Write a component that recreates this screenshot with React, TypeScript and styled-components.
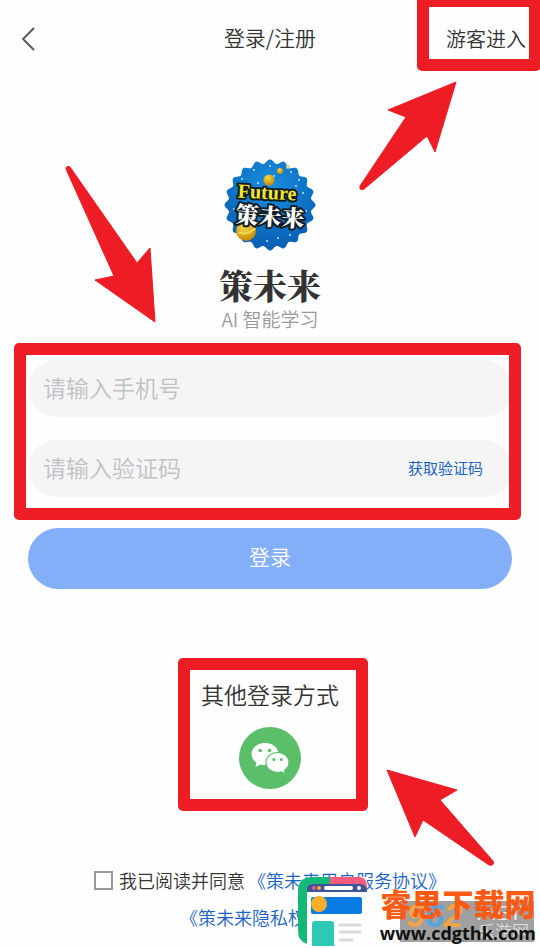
import React from 'react';
import styled, { createGlobalStyle } from 'styled-components';

const RED = '#ee1c24';
const LINK = '#1b62c4';

const GlobalStyle = createGlobalStyle`
  *, *::before, *::after { box-sizing: border-box; }
  body { margin: 0; background: #fefefe; }
  button, input { font: inherit; color: inherit; }
`;

const Page = styled.div`
  position: relative;
  min-height: 100vh;
  overflow: hidden;
  background: #fefefe;
  color: #333;
  font-family: 'Noto Sans CJK SC', sans-serif;
  font-size: 18px;
  font-weight: 350;
`;

const Header = styled.header`
  display: grid;
  grid-template-columns: 1fr auto 1fr;
  align-items: center;
  height: 78px;
  padding: 0 14px;
`;

const PlainButton = styled.button`
  display: inline-flex;
  align-items: center;
  padding: 0;
  border: 0;
  background: none;
  cursor: pointer;
`;

const BackButton = styled(PlainButton)`
  justify-self: start;
  padding: 0 6px;
`;

const Title = styled.h1`
  margin: 0;
  padding-bottom: 4px;
  font-size: 21px;
  font-weight: inherit;
  line-height: 32px;
`;

const GuestButton = styled(PlainButton)`
  position: relative;
  justify-self: end;
  font-size: 20px;
  line-height: 32px;
`;

const Frame = styled.span<{ $inset: string }>`
  position: absolute;
  inset: ${(p) => p.$inset};
  border: 12px solid ${RED};
  border-radius: 5px;
  pointer-events: none;
`;

const Arrow = styled.svg<{ $place: string }>`
  position: absolute;
  ${(p) => p.$place}
  fill: ${RED};
  stroke: ${RED};
  stroke-linejoin: round;
  pointer-events: none;
`;

const Brand = styled.section`
  position: relative;
  display: flex;
  flex-direction: column;
  align-items: center;
  padding-top: 81px;
`;

const BrandName = styled.h2`
  margin: 14px 0 0;
  font-family: 'Noto Serif CJK SC', 'Noto Sans CJK SC', serif;
  font-size: 34px;
  font-weight: 900;
  line-height: 40px;
`;

const Tagline = styled.p`
  margin: 0;
  color: #999;
  font-size: 19px;
  line-height: 28px;
`;

const Form = styled.form`
  padding: 27px 28px 0;
`;

const Fields = styled.div`
  position: relative;
  display: flex;
  flex-direction: column;
  gap: 23px;
`;

const Field = styled.div`
  display: flex;
  align-items: center;
  height: 57px;
  padding: 0 29px 0 15px;
  border-radius: 29px;
  background: #f5f5f5;
`;

const TextInput = styled.input`
  flex: 1;
  min-width: 0;
  height: 100%;
  padding: 0 0 4px;
  border: 0;
  outline: 0;
  background: none;
  font-size: 23px;
  &::placeholder { color: #bfc1c5; opacity: 1; }
`;

const CodeButton = styled(PlainButton)`
  padding-bottom: 2px;
  color: ${LINK};
  font-size: 15px;
  font-weight: 400;
`;

const LoginButton = styled.button`
  display: block;
  width: 100%;
  height: 61px;
  margin-top: 31px;
  padding: 0 0 6px;
  border: 0;
  border-radius: 31px;
  background: #82aff8;
  color: #fff;
  font-size: 21px;
  cursor: pointer;
`;

const OtherLogin = styled.section`
  position: relative;
  display: flex;
  flex-direction: column;
  align-items: center;
  width: fit-content;
  margin: 89px auto 0;
`;

const OtherTitle = styled.h2`
  margin: 0 0 17px;
  font-size: 23px;
  font-weight: inherit;
  line-height: 32px;
`;

const Agreement = styled.div`
  display: flex;
  flex-direction: column;
  align-items: center;
  margin-top: 73px;
  line-height: 37px;
`;

const AgreeRow = styled.div`
  display: flex;
  align-items: center;
  gap: 3px;
`;

const AgreeLabel = styled.label`
  display: flex;
  align-items: center;
  gap: 6px;
`;

const CheckBox = styled.input`
  appearance: none;
  width: 19px;
  height: 19px;
  margin: 0;
  border: 2px solid #999;
  &:checked { background: ${LINK}; }
`;

const Link = styled.a`
  color: ${LINK};
  text-decoration: none;
`;

const Watermark = styled.div`
  position: absolute;
  right: 4px;
  bottom: 1px;
  display: flex;
  align-items: flex-end;
  gap: 12px;
  pointer-events: none;
`;

const SiteText = styled.div`
  position: relative;
  display: flex;
  flex-direction: column;
  align-items: center;
`;

const SiteName = styled.strong`
  position: relative;
  color: #fb5a12;
  font-size: 31px;
  font-weight: 900;
  line-height: 32px;
`;

const SiteUrl = styled.span`
  position: relative;
  color: #111;
  font-family: 'Open Sans', sans-serif;
  font-size: 18px;
  font-weight: 700;
  line-height: 28px;
`;

const Badge = styled.svg`
  position: absolute;
  right: 2px;
  bottom: 5px;
  overflow: visible;
`;

const scallop = Array.from({ length: 240 }, (_, i) => {
  const a = (i / 240) * Math.PI * 2;
  const r = 43.5 + 2 * Math.cos(a * 20);
  return `${(46 + r * Math.sin(a)).toFixed(1)},${(46 - r * Math.cos(a)).toFixed(1)}`;
}).join(' ');

const stars = [[30, 11], [46, 7], [18, 20], [13, 38], [67, 13], [72, 27], [79, 34], [82, 52], [43, 82], [54, 79], [66, 76], [50, 17], [75, 21], [10, 50], [34, 24]];

const BrandLogo = () => (
  <svg width="92" height="92" viewBox="0 0 92 92" role="img" aria-label="Future 策未来">
    <defs>
      <radialGradient id="sky" cx="50%" cy="30%" r="65%">
        <stop offset="0" stopColor="#1a90de" />
        <stop offset="1" stopColor="#0861b5" />
      </radialGradient>
      <radialGradient id="gold" cx="40%" cy="30%" r="70%">
        <stop offset="0" stopColor="#f7d84a" />
        <stop offset="1" stopColor="#c58a08" />
      </radialGradient>
    </defs>
    <polygon points={scallop} fill="url(#sky)" />
    {stars.map(([x, y]) => <circle key={`${x}-${y}`} cx={x} cy={y} r="1" fill="#bfe4fa" />)}
    <circle cx="45" cy="21" r="5.5" fill="url(#gold)" />
    <circle cx="56" cy="12" r="3" fill="url(#gold)" />
    <circle cx="64" cy="8" r="2" fill="#ddc991" />
    <circle cx="22" cy="72" r="10" fill="url(#gold)" />
    <path d="M15 74q10 2 16-5" stroke="#f4d850" strokeWidth="2" fill="none" />
    <g stroke="#101b24" strokeLinejoin="round" paintOrder="stroke" textAnchor="middle">
      <text x="43" y="40" fill="#f7e72c" strokeWidth="4" fontFamily="Liberation Serif, serif" fontSize="20" fontWeight="700" transform="rotate(3 43 36)">Future</text>
      <text x="46" y="66" fill="#fff" strokeWidth="4" fontFamily="Noto Serif CJK SC, Noto Sans CJK SC, serif" fontSize="23" fontWeight="900" transform="rotate(4 46 58)">策未来</text>
    </g>
  </svg>
);

const WeChatIcon = () => (
  <svg width="62" height="62" viewBox="0 0 62 62" aria-hidden="true">
    <circle cx="31" cy="31" r="31" fill="#5bbf6a" />
    <path d="M26 16c-7.600 0-13.500 4.800-13.500 11 0 3.600 2 6.600 5 8.700L16.500 40l5-2.600c1.500.4 3 .6 4.500.6 7.500 0 13.500-4.800 13.500-11S33.500 16 26 16z" fill="#fff" />
    <path d="M38.500 25.500c-6.400 0-11.500 4.300-11.500 10s5.100 10 11.500 10c1.400 0 2.700-.2 4-.6l4 2.100-1-3.600c2.700-1.900 4.500-4.700 4.500-7.900 0-5.700-5.100-10-11.500-10z" fill="#fff" stroke="#5bbf6a" strokeWidth="1.200" />
    <g fill="#5bbf6a">
      <circle cx="21.200" cy="23.500" r="1.800" /><circle cx="30.500" cy="23.500" r="1.800" />
      <circle cx="34.800" cy="32.500" r="1.500" /><circle cx="42.300" cy="32.500" r="1.500" />
    </g>
  </svg>
);

const SiteLogo = () => (
  <svg width="70" height="70" viewBox="0 0 70 70" aria-hidden="true">
    <path d="M14 0H69V69H9V67Q0 64 0 54V14Q0 0 14 0Z" fill="#fefefe" />
    <path d="M14 0H32V7H14Q9 7 9 14V67Q0 64 0 54V14Q0 0 14 0Z" fill="#14b978" />
    <path d="M32 0H62Q69 1 69 9V15H62L32 8Z" fill="#f95b7f" />
    <path d="M9 15V12Q9 7 15 7H62Q69 7 69 15Z" fill="#3c5397" />
    <circle cx="16" cy="11" r="2" fill="#f95b7f" /><circle cx="21" cy="11" r="2" fill="#f8ad35" />
    <rect x="26" y="9" width="29" height="4" rx="2" fill="#fff" /><circle cx="61" cy="11" r="2" fill="#fff" />
    <rect x="13" y="20" width="51" height="17" rx="2" fill="#087be5" />
    <circle cx="21" cy="27" r="8" fill="#fbae2c" />
    <path d="M14 69V47Q14 44 17 44H33Q36 44 36 47V69Z" fill="#2dc9b4" />
    <path d="M42 48H62M42 55H62M42 63H54" stroke="#dadada" strokeWidth="3" strokeLinecap="round" />
  </svg>
);

export default function App() {
  return (
    <Page>
      <GlobalStyle />
      <Header>
        <BackButton aria-label="返回">
          <svg width="16" height="26" viewBox="0 0 16 26" fill="none" stroke="#555" strokeWidth="1.800">
            <path d="M14 2L3 13L14 24" />
          </svg>
        </BackButton>
        <Title>登录/注册</Title>
        <GuestButton>游客进入<Frame $inset="-28px -15px -16px -29px" /></GuestButton>
      </Header>

      <Brand>
        <BrandLogo />
        <BrandName>策未来</BrandName>
        <Tagline>AI 智能学习</Tagline>
        <Arrow $place="top: 88px; right: calc(50% + 110px);" width="96" height="158" viewBox="64 166 96 158" strokeWidth="1">
          <path d="M66 169Q66 165 70 167L137 263L150 248L155 322L95 280L114 276Z" />
        </Arrow>
        <Arrow $place="top: 1px; right: 80px;" width="102" height="114" viewBox="358 79 102 114" strokeWidth="1">
          <path d="M456 82L388 110L406 117L360 186Q359 191 364 189L427 136L435 152Z" />
        </Arrow>
      </Brand>

      <Form onSubmit={(e) => e.preventDefault()}>
        <Fields>
          <Field><TextInput type="tel" aria-label="手机号" placeholder="请输入手机号" /></Field>
          <Field>
            <TextInput aria-label="验证码" placeholder="请输入验证码" />
            <CodeButton type="button">获取验证码</CodeButton>
          </Field>
          <Frame $inset="-17px -9px -23px -14px" />
        </Fields>
        <LoginButton type="submit">登录</LoginButton>
      </Form>

      <OtherLogin>
        <OtherTitle>其他登录方式</OtherTitle>
        <PlainButton aria-label="微信登录"><WeChatIcon /></PlainButton>
        <Frame $inset="-20px -29px -22px -23px" />
        <Arrow $place="top: 89px; left: 184px;" width="112" height="100" viewBox="385 767 112 100" strokeWidth="1">
          <path d="M387 770L457 790L440 800L493 861Q495 866 489 865L423 820L415 837Z" />
        </Arrow>
      </OtherLogin>

      <Agreement>
        <AgreeRow>
          <AgreeLabel><CheckBox type="checkbox" />我已阅读并同意</AgreeLabel>
          <Link href="#service">《策未来用户服务协议》</Link>
        </AgreeRow>
        <Link href="#privacy">《策未来隐私权政策》</Link>
      </Agreement>

      <Watermark>
        <SiteLogo />
        <SiteText>
          <Badge width="134" height="41" viewBox="0 0 134 41" aria-hidden="true">
            <rect width="134" height="41" fill="#777" opacity="0.7" />
            <text x="6" y="26" fontFamily="Liberation Sans" fontSize="34" fontWeight="700" fontStyle="italic"><tspan fill="#f4a346">9</tspan><tspan fill="#58a5dc">6</tspan><tspan fill="#f4a346">2</tspan></text>
            <text x="76" y="19" fill="#eee" fontFamily="Liberation Sans" fontSize="20">.NET</text>
            <text x="78" y="37" fill="#ddd" fontFamily="Noto Sans CJK SC" fontSize="17">乐游网</text>
          </Badge>
          <SiteName>睿思下载网</SiteName>
          <SiteUrl>www.cdgthk.com</SiteUrl>
        </SiteText>
      </Watermark>
    </Page>
  );
}
